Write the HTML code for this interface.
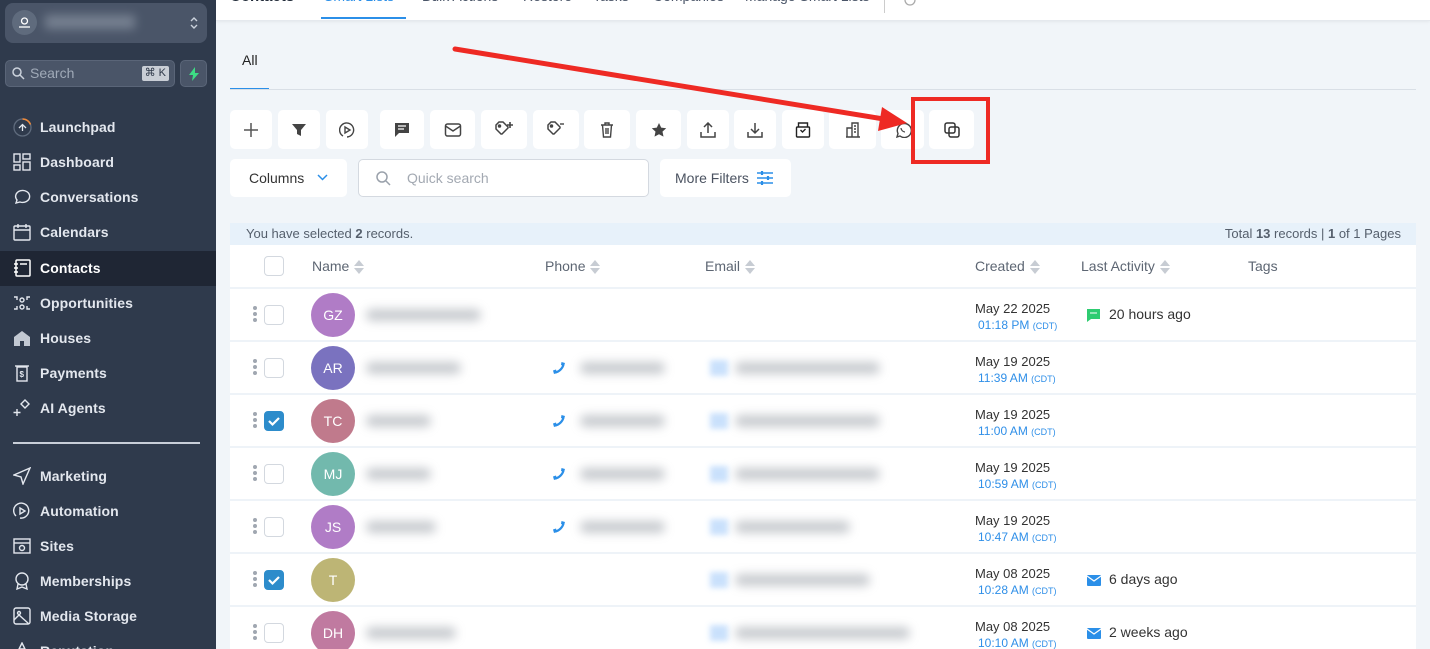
<!DOCTYPE html>
<html><head><meta charset="utf-8">
<style>
*{box-sizing:border-box;margin:0;padding:0}
html{width:1430px;height:649px;overflow:hidden}
body{width:1430px;height:649px;overflow:hidden;background:#f1f5f9;font-family:"Liberation Sans",sans-serif;position:relative}
.sb{position:absolute;left:0;top:0;width:216px;height:649px;background:#2f3a4c}
.acct{position:absolute;left:5px;top:3px;width:202px;height:40px;background:#4a5568;border-radius:8px}
.acct .av{position:absolute;left:7px;top:7px;width:25px;height:25px;border-radius:50%;background:#5f6b7d}
.acct .bl{position:absolute;left:40px;top:12px;width:90px;height:14px;background:#8a94a3;filter:blur(5px);opacity:.7}
.srch{position:absolute;left:5px;top:60px;width:170px;height:27px;background:#4a5568;border-radius:5px;border:1px solid #5a6578;color:#a0aab8;font-size:14px;line-height:25px;padding-left:24px}
.kbd{position:absolute;right:5px;top:5px;height:15px;padding:0 3px;background:#c9ced6;color:#2d3748;font-size:11px;line-height:15px;border-radius:2px}
.bolt{position:absolute;left:180px;top:60px;width:27px;height:27px;background:#4a5568;border-radius:5px;border:1px solid #5a6578}
.it{position:absolute;left:0;width:216px;height:35px;color:#e3e7ee;font-size:14px;line-height:35px;padding-left:40px;font-weight:bold;letter-spacing:.1px}
.it svg{position:absolute;left:13px;top:8px}
.it.on{background:#1f2634;color:#fff}
.div{position:absolute;left:13px;top:442px;width:187px;height:2px;background:#c8ced8}
.top{position:absolute;left:216px;top:0;width:1214px;height:21px;background:#fff;border-bottom:1px solid #e5e9ee;box-shadow:0 1px 3px rgba(0,0,0,.06);overflow:hidden}
.top span{position:absolute;top:-12px;font-size:14px;color:#4a5568}
.btn{position:absolute;top:110px;height:39px;background:#fff;border-radius:5px}
.btn svg{position:absolute;left:50%;top:50%;transform:translate(-50%,-50%)}
.tbl{position:absolute;left:230px;top:223px;width:1186px;height:426px;background:#fff}
.info{position:absolute;left:0;top:0;width:1186px;height:22px;background:#e7f1fa;font-size:13px;color:#555f6c;line-height:22px}
.hdr{position:absolute;top:22px;left:0;width:1186px;height:44px;border-bottom:2px solid #eef3f8;font-size:14px;color:#5d6673}
.hdr span{position:absolute;top:13px}
.sort{display:inline-block;vertical-align:middle;margin-left:5px;width:10px;height:14px;position:relative}
.sort:before{content:"";position:absolute;left:0;top:0;border:5px solid transparent;border-bottom:6px solid #c7ccd3;border-top:0}
.sort:after{content:"";position:absolute;left:0;bottom:0;border:5px solid transparent;border-top:6px solid #c7ccd3;border-bottom:0}
.row{position:absolute;left:0;width:1186px;height:53px;border-bottom:2px solid #eef3f8;background:#fff}
.cb{position:absolute;left:34px;width:20px;height:20px;border:1px solid #d3d8df;border-radius:4px;background:#fff}
.cb.on{background:#2d8ccb;border-color:#2d8ccb}
.dots{position:absolute;left:23px;width:4px}
.dots i{display:block;width:4px;height:4px;border-radius:50%;background:#a0a7b1;margin-bottom:2px}
.avt{position:absolute;left:81px;top:4px;width:44px;height:44px;border-radius:50%;color:#fff;font-size:14px;text-align:center;line-height:44px}
.blur{position:absolute;height:12px;background:#9aa0a8;filter:blur(5px);opacity:.55;border-radius:6px}
.eic{position:absolute;width:18px;height:16px;background:#bcd9fb;filter:blur(3px);opacity:.8}
.d1{position:absolute;left:745px;top:12px;font-size:13px;color:#333}
.d2{position:absolute;left:748px;top:29px;font-size:12px;color:#2f8fe8}
.d2 small{font-size:9px}
.lastact{position:absolute;left:879px;top:17px;font-size:14px;color:#333}
</style></head><body>
<div class="sb">
 <div class="acct"><div class="av"><svg width="25" height="25" viewBox="0 0 25 25"><circle cx="12.5" cy="11" r="3" fill="none" stroke="#fff" stroke-width="1.3"/><path d="M7 17h11" stroke="#fff" stroke-width="1.3"/></svg></div><div class="bl"></div>
 <svg style="position:absolute;right:9px;top:13px" width="8" height="14" viewBox="0 0 8 14"><path d="M1 5l3-3 3 3M1 9l3 3 3-3" fill="none" stroke="#cbd2dc" stroke-width="1.4"/></svg></div>
 <div class="srch"><svg style="position:absolute;left:6px;top:6px" width="13" height="13" viewBox="0 0 13 13"><circle cx="5" cy="5" r="4" fill="none" stroke="#cbd2dc" stroke-width="1.5"/><path d="M8 8l4 4" stroke="#cbd2dc" stroke-width="1.5"/></svg>Search<span class="kbd">⌘ K</span></div>
 <div class="bolt"><svg style="position:absolute;left:7px;top:6px" width="12" height="14" viewBox="0 0 12 14"><path d="M7 0L1 8h4l-1 6 7-8H7z" fill="#3ddc84"/></svg></div>
 <div class="it" style="top:110px"><svg width="19" height="19" viewBox="0 0 19 19"><circle cx="9.5" cy="9.5" r="8.5" fill="none" stroke="#5f6b7d" stroke-width="1.3"/><path d="M9.5 1a8.5 8.5 0 0 1 8 5.5" fill="none" stroke="#f08a3a" stroke-width="1.5"/><path d="M6 10l3.5-3.5L13 10M9.5 7v6" fill="none" stroke="#e3e7ee" stroke-width="1.3"/></svg>Launchpad</div>
 <div class="it" style="top:145px"><svg width="18" height="18" viewBox="0 0 18 18" fill="none" stroke="#e3e7ee" stroke-width="1.4"><rect x="1" y="1" width="6" height="8"/><rect x="10" y="1" width="7" height="5"/><rect x="1" y="12" width="6" height="5"/><rect x="10" y="9" width="7" height="8"/></svg>Dashboard</div>
 <div class="it" style="top:180px"><svg width="18" height="18" viewBox="0 0 18 18"><path d="M3 15l1-3a7 6 0 1 1 3 2z" fill="none" stroke="#e3e7ee" stroke-width="1.4"/></svg>Conversations</div>
 <div class="it" style="top:215px"><svg width="18" height="18" viewBox="0 0 18 18" fill="none" stroke="#e3e7ee" stroke-width="1.4"><rect x="1" y="3" width="16" height="14" rx="1"/><path d="M1 7h16M5 1v4M13 1v4"/></svg>Calendars</div>
 <div class="it on" style="top:251px"><svg width="18" height="18" viewBox="0 0 18 18" fill="none" stroke="#fff" stroke-width="1.5"><rect x="3" y="1" width="14" height="16" rx="1"/><path d="M1 5h4M1 9h4M1 13h4M7 5h7"/></svg>Contacts</div>
 <div class="it" style="top:286px"><svg width="18" height="18" viewBox="0 0 18 18" fill="none" stroke="#e3e7ee" stroke-width="1.4"><circle cx="9" cy="6" r="2"/><circle cx="9" cy="13" r="2"/><path d="M1 3h3v3M17 3h-3v3M1 15h3v-3M17 15h-3v-3"/></svg>Opportunities</div>
 <div class="it" style="top:321px"><svg width="18" height="18" viewBox="0 0 18 18"><path d="M1 8l8-6 8 6v9H1z" fill="#c2c8d2"/><rect x="7" y="12" width="4" height="5" fill="#2f3a4c"/></svg>Houses</div>
 <div class="it" style="top:356px"><svg width="18" height="18" viewBox="0 0 18 18" fill="none" stroke="#e3e7ee" stroke-width="1.4"><rect x="4" y="3" width="10" height="14"/><path d="M2 2h14"/><text x="6.5" y="13" font-size="8" fill="#e3e7ee" stroke="none">$</text></svg>Payments</div>
 <div class="it" style="top:391px"><svg width="18" height="18" viewBox="0 0 18 18" fill="none" stroke="#e3e7ee" stroke-width="1.4"><path d="M12 1l4 4-4 4-4-4z"/><path d="M4 10v7M0.5 13.5h7"/></svg>AI Agents</div>
 <div class="div"></div>
 <div class="it" style="top:459px"><svg width="18" height="18" viewBox="0 0 18 18" fill="none" stroke="#e3e7ee" stroke-width="1.4"><path d="M17 1L1 8l7 2 2 7z"/></svg>Marketing</div>
 <div class="it" style="top:494px"><svg width="18" height="18" viewBox="0 0 18 18" fill="none" stroke="#e3e7ee" stroke-width="1.4"><path d="M3 14a7.5 7.5 0 1 1 4 2"/><path d="M7 6l5 3-5 3z"/></svg>Automation</div>
 <div class="it" style="top:529px"><svg width="18" height="18" viewBox="0 0 18 18" fill="none" stroke="#e3e7ee" stroke-width="1.4"><rect x="1" y="2" width="16" height="14"/><path d="M1 6h16"/><circle cx="9" cy="11" r="2.5"/></svg>Sites</div>
 <div class="it" style="top:564px"><svg width="18" height="18" viewBox="0 0 18 18" fill="none" stroke="#e3e7ee" stroke-width="1.4"><circle cx="9" cy="7" r="6"/><path d="M5 12l-1 5 5-2 5 2-1-5"/></svg>Memberships</div>
 <div class="it" style="top:599px"><svg width="18" height="18" viewBox="0 0 18 18" fill="none" stroke="#e3e7ee" stroke-width="1.4"><rect x="1" y="1" width="16" height="16" rx="2"/><circle cx="6" cy="6" r="1.5"/><path d="M1 13l5-5 10 9"/></svg>Media Storage</div>
 <div class="it" style="top:634px"><svg width="18" height="18" viewBox="0 0 18 18" fill="none" stroke="#e3e7ee" stroke-width="1.4"><path d="M9 1l3 6H6z"/></svg>Reputation</div>
</div>

<div class="top">
 <span style="left:14px;font-weight:bold;color:#1f2937;font-size:15px">Contacts</span>
 <span style="left:108px;color:#2b8fe8">Smart Lists</span>
 <span style="left:206px">Bulk Actions</span>
 <span style="left:307px">Restore</span>
 <span style="left:377px">Tasks</span>
 <span style="left:437px">Companies</span>
 <span style="left:529px">Manage Smart Lists</span>
 <div style="position:absolute;left:105px;top:17px;width:85px;height:2px;background:#2b8fe8"></div>
 <div style="position:absolute;left:668px;top:0;width:1px;height:13px;background:#ccc"></div>
 <svg style="position:absolute;left:687px;top:-4px" width="14" height="12" viewBox="0 0 14 12"><circle cx="7" cy="4" r="5" fill="none" stroke="#aaa" stroke-width="1.3"/></svg>
</div>

<div style="position:absolute;left:242px;top:52px;font-size:14px;color:#222">All</div>
<div style="position:absolute;left:230px;top:88px;width:39px;height:2px;background:#2b8fe8"></div>
<div style="position:absolute;left:230px;top:89px;width:1186px;height:1px;background:#d9dfe6"></div>

<div class="btn" style="left:230px;width:42px"><svg width="16" height="16"><path d="M8 1v14M1 8h14" stroke="#555" stroke-width="1.5"/></svg></div>
<div class="btn" style="left:278px;width:42px"><svg width="14" height="14"><path d="M0 1h14L9 7v6l-4-2V7z" fill="#444"/></svg></div>
<div class="btn" style="left:326px;width:42px"><svg width="16" height="16" fill="none" stroke="#444" stroke-width="1.4"><path d="M4 14A7 7 0 1 1 8 15"/><path d="M6 5l5 3-5 3z"/></svg></div>
<div class="btn" style="left:380px;width:44px"><svg width="16" height="16"><path d="M1 1h14v10H5l-4 4z" fill="#444"/><path d="M4 4h8M4 7h6" stroke="#fff" stroke-width="1.2"/></svg></div>
<div class="btn" style="left:430px;width:45px"><svg width="17" height="14" fill="none" stroke="#444" stroke-width="1.5"><rect x="1" y="1" width="15" height="12" rx="2"/><path d="M1 3l7.5 5L16 3"/></svg></div>
<div class="btn" style="left:481px;width:46px"><svg width="20" height="18" fill="none" stroke="#444" stroke-width="1.5"><path d="M2 4l3-3h4l5 5v1l-6 6H7L2 8z"/><circle cx="5.5" cy="5" r="1" fill="#444"/><path d="M16 1v6M13 4h6" stroke-width="1.6"/></svg></div>
<div class="btn" style="left:533px;width:46px"><svg width="20" height="18" fill="none" stroke="#444" stroke-width="1.5"><path d="M2 4l3-3h4l5 5v1l-6 6H7L2 8z"/><circle cx="5.5" cy="5" r="1" fill="#444"/><path d="M14 3h4" stroke-width="1.4"/></svg></div>
<div class="btn" style="left:584px;width:46px"><svg width="14" height="16" fill="none" stroke="#444" stroke-width="1.4"><path d="M1 3h12M5 3V1h4v2M2.5 3l1 12h7l1-12M6 6v6M8 6v6"/></svg></div>
<div class="btn" style="left:636px;width:45px"><svg width="16" height="16"><path d="M8 1l2.2 4.6 5 .6-3.7 3.4 1 5L8 12.2 3.5 14.6l1-5L.8 6.2l5-.6z" fill="#444"/></svg></div>
<div class="btn" style="left:687px;width:42px"><svg width="16" height="16" fill="none" stroke="#444" stroke-width="1.5"><path d="M8 11V1M4 5l4-4 4 4M1 10v5h14v-5"/></svg></div>
<div class="btn" style="left:734px;width:42px"><svg width="16" height="16" fill="none" stroke="#444" stroke-width="1.5"><path d="M8 1v10M4 7l4 4 4-4M1 10v5h14v-5"/></svg></div>
<div class="btn" style="left:782px;width:42px"><svg width="15" height="16" fill="none" stroke="#222" stroke-width="1.4"><rect x="1" y="5" width="13" height="10" rx="1"/><path d="M3 5V1h9v4M5 8l2 2 3-3"/></svg></div>
<div class="btn" style="left:829px;width:47px"><svg width="16" height="16" fill="none" stroke="#444" stroke-width="1.4"><path d="M1 15h14M2 15V6h5v9M7 15V1h6v14M9 4h2M9 7h2M9 10h2"/></svg></div>
<div class="btn" style="left:881px;width:43px"><svg width="16" height="16" fill="none" stroke="#444" stroke-width="1.4"><path d="M2 15l1-3.5A7 7 0 1 1 5 14z"/><path d="M6 6c0 2 2 4 4 4" stroke-width="1.2"/></svg></div>
<div class="btn" style="left:929px;width:45px"><svg width="16" height="16" fill="none" stroke="#333" stroke-width="1.5"><rect x="1" y="1" width="10" height="10" rx="2"/><rect x="5" y="5" width="10" height="10" rx="2"/></svg></div>

<svg style="position:absolute;left:0;top:0" width="1430" height="200">
 <path d="M455 49L890 120" stroke="#ee2a24" stroke-width="5" stroke-linecap="round"/>
 <path d="M907 123L882 107L878 131z" fill="#ee2a24"/>
 <rect x="913" y="99" width="75" height="63" fill="none" stroke="#ee2a24" stroke-width="4"/>
</svg>

<div style="position:absolute;left:230px;top:159px;width:117px;height:38px;background:#fff;border-radius:5px;font-size:14px;color:#333;line-height:38px;padding-left:19px">Columns<svg style="position:absolute;left:87px;top:15px" width="11" height="8"><path d="M1 1l4.5 4.5L10 1" fill="none" stroke="#2b8fe8" stroke-width="1.5"/></svg></div>
<div style="position:absolute;left:358px;top:159px;width:291px;height:38px;background:#fff;border:1px solid #d4d9e0;border-radius:5px;font-size:14px;color:#a3a9b2;line-height:36px;padding-left:48px"><svg style="position:absolute;left:17px;top:11px" width="15" height="15" fill="none" stroke="#9aa1ab" stroke-width="1.5"><circle cx="6" cy="6" r="5"/><path d="M10 10l4 4"/></svg>Quick search</div>
<div style="position:absolute;left:660px;top:159px;width:131px;height:38px;background:#fff;border-radius:5px;font-size:14px;color:#4a5260;line-height:38px;padding-left:15px">More Filters<svg style="position:absolute;left:97px;top:12px" width="16" height="14" stroke="#2b8fe8" stroke-width="1.6"><path d="M0 2h16M0 7h16M0 12h16"/><path d="M5 0v4M11 5v4M5 10v4" stroke-width="2.2"/></svg></div>

<div class="tbl">
 <div class="info"><span style="position:absolute;left:16px">You have selected <b>2</b> records.</span><span style="position:absolute;right:15px">Total <b>13</b> records | <b>1</b> of 1 Pages</span></div>
 <div class="hdr">
  <div class="cb" style="top:11px"></div>
  <span style="left:82px">Name<i class="sort"></i></span>
  <span style="left:315px">Phone<i class="sort"></i></span>
  <span style="left:475px">Email<i class="sort"></i></span>
  <span style="left:745px">Created<i class="sort"></i></span>
  <span style="left:851px">Last Activity<i class="sort"></i></span>
  <span style="left:1018px">Tags</span>
 </div>
</div>

<div id="rows" style="position:absolute;left:230px;top:289px;width:1186px;height:360px;overflow:hidden"></div>
<script>
var ph='<svg style="position:absolute;left:322px;top:19px" width="14" height="14" viewBox="0 0 14 14"><path d="M3 11.5C7 11 11 7 11.5 3" fill="none" stroke="#2b8fe8" stroke-width="2.2"/><path d="M1 9.5l3-1 1 3.5-3 1z M9.5 1l3.5 1-1 3-3-1z" fill="#2b8fe8"/></svg>';
var R=[["GZ","#b07cc6",0,0,0,"May 22 2025","01:18 PM","chat","20 hours ago",115,0],
["AR","#7a72bf",0,1,1,"May 19 2025","11:39 AM","","",95,145],
["TC","#c07a8c",1,1,1,"May 19 2025","11:00 AM","","",65,145],
["MJ","#72b9ad",0,1,1,"May 19 2025","10:59 AM","","",65,145],
["JS","#b07cc6",0,1,1,"May 19 2025","10:47 AM","","",70,115],
["T","#bdb575",1,0,1,"May 08 2025","10:28 AM","mail","6 days ago",0,135],
["DH","#c07aa0",0,0,1,"May 08 2025","10:10 AM","mail","2 weeks ago",90,175]];
var h='';
R.forEach(function(r,i){
 var t=i*53;
 h+='<div class="row" style="top:'+t+'px">';
 h+='<div class="dots" style="top:17px"><i></i><i></i><i></i></div>';
 h+='<div class="cb'+(r[2]?' on':'')+'" style="top:16px">'+(r[2]?'<svg width="18" height="18"><path d="M4 9l3.5 3.5L14 6" fill="none" stroke="#fff" stroke-width="2.2"/></svg>':'')+'</div>';
 h+='<div class="avt" style="background:'+r[1]+'">'+r[0]+'</div>';
 if(r[9])h+='<div class="blur" style="left:136px;top:20px;width:'+r[9]+'px"></div>';
 if(r[3])h+=ph+'<div class="blur" style="left:350px;top:20px;width:85px"></div>';
 if(r[4])h+='<div class="eic" style="left:480px;top:18px"></div><div class="blur" style="left:505px;top:20px;width:'+r[10]+'px"></div>';
 h+='<div class="d1">'+r[5]+'</div><div class="d2">'+r[6]+' <small>(CDT)</small></div>';
 if(r[7]=="chat")h+='<svg style="position:absolute;left:857px;top:20px" width="13" height="13"><path d="M0 0h13v10H4L0 13z" fill="#2ecc71"/><path d="M3 4h7" stroke="#fff"/></svg>';
 if(r[7]=="mail")h+='<svg style="position:absolute;left:857px;top:21px" width="14" height="11"><rect width="14" height="11" rx="1" fill="#2b8fe8"/><path d="M0 1l7 5 7-5" fill="none" stroke="#fff" stroke-width="1.2"/></svg>';
 if(r[8])h+='<div class="lastact">'+r[8]+'</div>';
 h+='</div>';
});
document.getElementById('rows').innerHTML=h;
</script>
</body></html>
